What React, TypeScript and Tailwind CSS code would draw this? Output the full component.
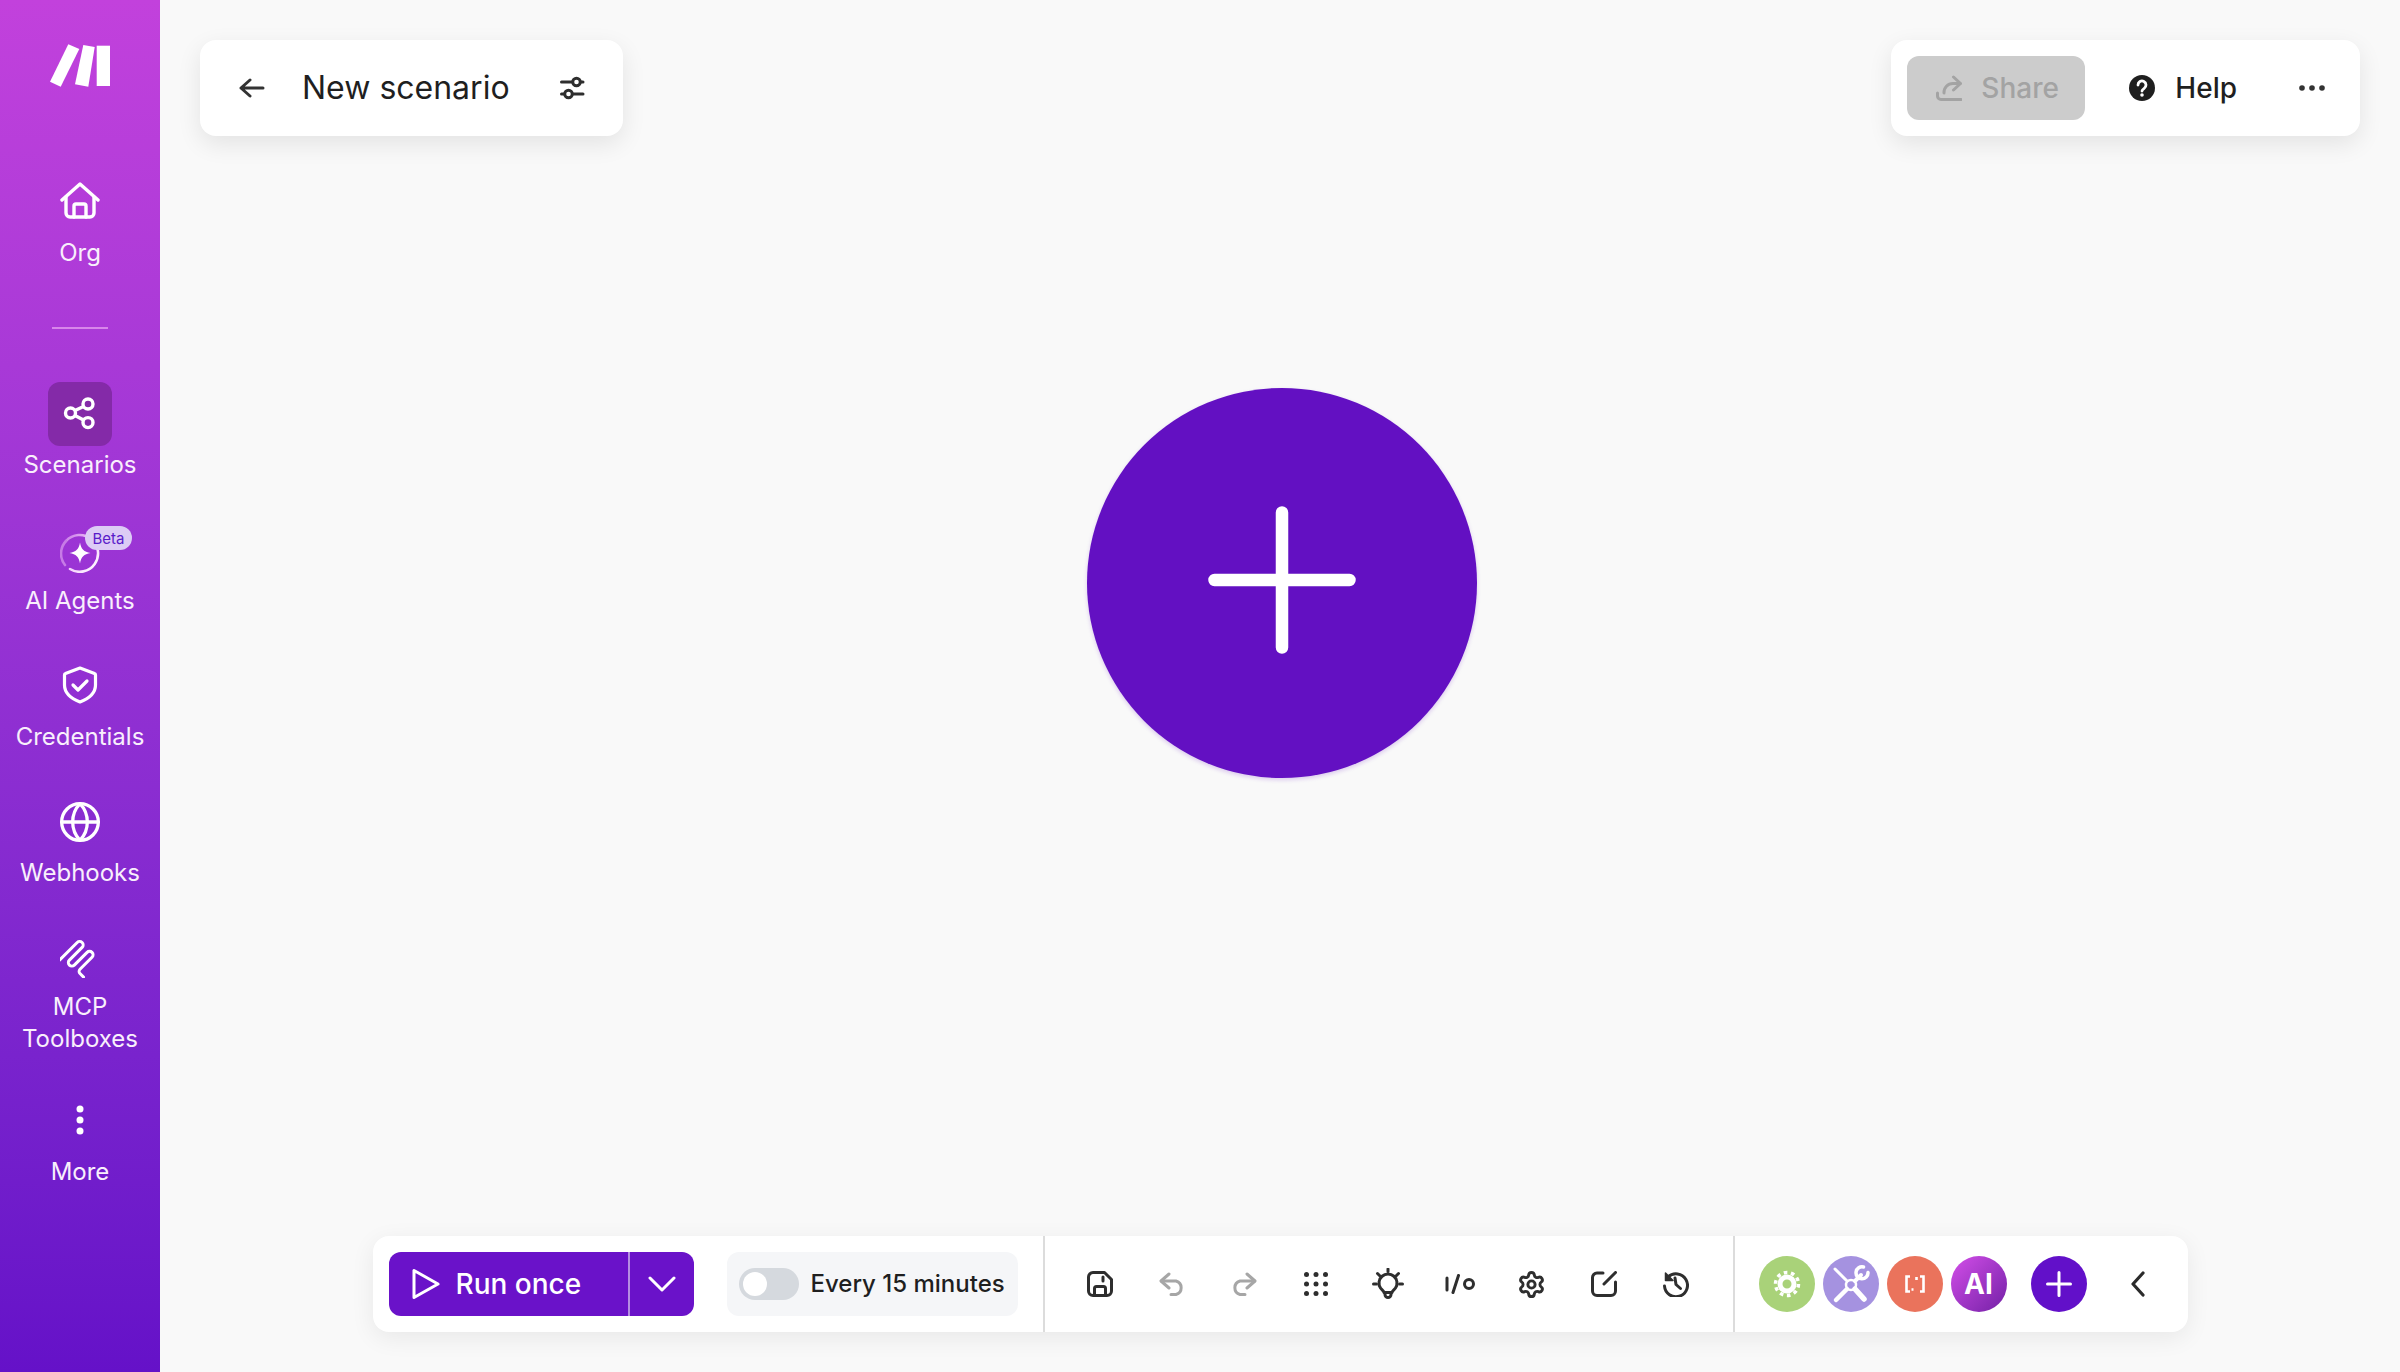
import type { ReactNode } from "react";
import { Globe, Settings } from "lucide-react";

function NavItem({
  icon,
  label,
  active,
  className = "",
}: {
  icon: ReactNode;
  label: ReactNode;
  active?: boolean;
  className?: string;
}) {
  return (
    <div className={`relative flex flex-col items-center w-full ${className}`}>
      <div
        className={`flex items-center justify-center w-16 h-16 rounded-xl ${
          active ? "bg-[#842aa8]" : ""
        }`}
      >
        {icon}
      </div>
      <div className="mt-[3px] text-[24px] leading-8 text-center text-[#f9effc]">
        {label}
      </div>
    </div>
  );
}

function Sidebar() {
  return (
    <aside className="flex flex-col items-center w-40 h-full shrink-0 pt-[44px] bg-linear-to-b from-[#c241dc] to-[#6511c8]">
      <svg viewBox="50 44 60 43" className="w-[60px] h-[43px]" fill="#fff">
        <path d="M68.3 44.3 79.3 49 60.7 86.7 50 81.7Z" />
        <path d="M83.3 45 94.7 47 88.3 86.7 75 84.3Z" />
        <path d="M96.7 45.7H110V86H96.7Z" />
      </svg>

      <NavItem
        className="mt-[83px]"
        label="Org"
        icon={
          <svg viewBox="0 0 40 37" className="w-10 h-[37px] -mt-[3px]" fill="none" stroke="#fff" strokeWidth="3.4" strokeLinecap="round" strokeLinejoin="round">
            <path d="M2 18 20 2l18 16" />
            <path d="M6 15v16a4 4 0 0 0 4 4h20a4 4 0 0 0 4-4V15" />
            <path d="M14 35V24a2 2 0 0 1 2-2h8a2 2 0 0 1 2 2v11" />
          </svg>
        }
      />

      <div className="mt-[58px] h-[2px] w-14 bg-[#d886ea]" />

      <NavItem
        className="mt-[53px]"
        active
        label="Scenarios"
        icon={
          <svg viewBox="0 0 34 34" className="w-[34px] h-[34px]" fill="none" stroke="#fff" strokeWidth="3.4">
            <circle cx="7.5" cy="16" r="5" />
            <circle cx="25" cy="7" r="5" />
            <circle cx="25" cy="25.6" r="5" />
            <path d="m12 13.5 8.5-4M12 18.5l8.5 4.6" />
          </svg>
        }
      />

      <NavItem
        className="mt-[37px]"
        label="AI Agents"
        icon={
          <svg viewBox="0 0 40 40" className="w-10 h-10 mt-[6px]" fill="none">
            <defs>
              <linearGradient id="agentArc" x1="1" y1="1" x2="0" y2="0">
                <stop offset="0" stopColor="#fff" />
                <stop offset="0.55" stopColor="#f3c8fb" />
                <stop offset="1" stopColor="#c77be6" />
              </linearGradient>
            </defs>
            <path d="M10 36A18.4 18.4 0 1 0 6 8" stroke="url(#agentArc)" strokeWidth="2.6" strokeLinecap="round" />
            <path d="M6 8A18.4 18.4 0 0 0 5 32" stroke="#c77be6" strokeWidth="2.6" strokeLinecap="round" />
            <path d="M20 9.5c1 6.5 4 9.5 10.5 10.5-6.5 1-9.5 4-10.5 10.5-1-6.5-4-9.5-10.5-10.5C16 19 19 16 20 9.5Z" fill="#fff" />
          </svg>
        }
      />

      <NavItem
        className="mt-[37px]"
        label="Credentials"
        icon={
          <svg viewBox="0 0 36 38" className="w-9 h-[38px] -mt-[2px]" fill="none" stroke="#fff" strokeWidth="3.2" strokeLinecap="round" strokeLinejoin="round">
            <path d="M18 2 32.5 7.5a1.5 1.5 0 0 1 1 1.4V19c0 8-6.5 13.5-15.5 17C9 32.5 2.5 27 2.5 19V8.9a1.5 1.5 0 0 1 1-1.4Z" />
            <path d="m11 19 5 5 9-9" />
          </svg>
        }
      />

      <NavItem
        className="mt-[37px]"
        label="Webhooks"
        icon={<Globe className="size-[44px] text-white -mt-[1px]" strokeWidth={1.8} />}
      />

      <NavItem
        className="mt-[37px]"
        label={
          <div className="-mt-[2px]">
            MCP
            <br />
            Toolboxes
          </div>
        }
        icon={
          <svg viewBox="0 0 40 40" className="w-10 h-10" fill="none" stroke="#fff" strokeWidth="3" strokeLinecap="round" strokeLinejoin="round">
            <path
              transform="rotate(-45 20 20)"
              d="M4 7h25a3.5 3.5 0 0 1 0 7H11a3.5 3.5 0 0 0 0 7h18a3.5 3.5 0 0 1 0 7H12a3 3 0 0 0-3 3v5"
            />
          </svg>
        }
      />

      <NavItem
        className="-mt-[2px] pt-[36px]"
        label="More"
        icon={
          <svg viewBox="0 0 8 30" className="w-2 h-[30px] -mt-[2px]" fill="#fff">
            <circle cx="4" cy="4" r="3.5" />
            <circle cx="4" cy="15" r="3.5" />
            <circle cx="4" cy="26" r="3.5" />
          </svg>
        }
      />
    </aside>
  );
}

function TopBar() {
  return (
    <div className="flex items-start justify-between">
      <div className="flex items-center h-24 pl-[39px] pr-[38px] rounded-2xl bg-white shadow-[0_8px_24px_rgba(0,0,0,0.09)]">
        <svg viewBox="0 0 26 20" className="w-[26px] h-5" fill="none" stroke="#333" strokeWidth="3" strokeLinecap="round" strokeLinejoin="round">
          <path d="M11 2 2 10l9 8M2 10h22" />
        </svg>
        <span className="ml-[37px] text-[32px] leading-10 text-[#1f1f1f]">New scenario</span>
        <svg viewBox="0 0 25 24" className="ml-[50px] w-[25px] h-6" fill="#fff" stroke="#2e2e2e" strokeWidth="3" strokeLinecap="round">
          <path d="M1.5 6H23M1.5 18H23" />
          <circle cx="16.5" cy="6" r="3.8" />
          <circle cx="8.5" cy="18" r="3.8" />
        </svg>
      </div>

      <div className="flex items-center h-24 pl-4 pr-[35px] rounded-2xl bg-white shadow-[0_8px_24px_rgba(0,0,0,0.09)]">
        <div className="flex items-center w-[178px] h-16 pl-[29px] rounded-xl bg-[#cccccc] text-[#a3a3a3]">
          <svg viewBox="0 0 26 26" className="w-[26px] h-[26px]" fill="none" stroke="#a3a3a3" strokeWidth="3" strokeLinecap="round" strokeLinejoin="round">
            <path d="M1.5 18v3A3.5 3.5 0 0 0 5 24.5h20" />
            <path d="M8 18a9 9 0 0 1 9-9.5h7" />
            <path d="m17.5 2 7 6.5-7 6.5" />
          </svg>
          <span className="ml-[19px] text-[28px] leading-9 font-medium">Share</span>
        </div>
        <svg viewBox="0 0 26 26" className="ml-[44px] w-[26px] h-[26px]" fill="none">
          <circle cx="13" cy="13" r="13" fill="#1f1f1f" />
          <path d="M9 10a4 4 0 1 1 6.2 3.3c-1.5 1-2.2 1.6-2.2 2.7" stroke="#fff" strokeWidth="2.8" strokeLinecap="round" />
          <circle cx="13" cy="20" r="1.8" fill="#fff" />
        </svg>
        <span className="ml-5 text-[28px] leading-9 font-medium text-[#1f1f1f]">Help</span>
        <svg viewBox="0 0 26 6" className="ml-[62px] w-[26px] h-1.5" fill="#333">
          <circle cx="3" cy="3" r="2.8" />
          <circle cx="13" cy="3" r="2.8" />
          <circle cx="23" cy="3" r="2.8" />
        </svg>
      </div>
    </div>
  );
}

function ToolIcon({ children }: { children: ReactNode }) {
  return <div className="flex items-center justify-center w-[72px] h-10">{children}</div>;
}

function ToolIcons() {
  const stroke = {
    fill: "none",
    stroke: "#2e2e2e",
    strokeWidth: 3,
    strokeLinecap: "round" as const,
    strokeLinejoin: "round" as const,
  };
  return (
    <div className="flex items-center pl-[19px] pr-[21px] h-full">
      <ToolIcon>
        <svg viewBox="0 0 26 26" className="w-[26px] h-[26px]" {...stroke}>
          <path d="M6 1.5h11.5l7 7V20a4.5 4.5 0 0 1-4.5 4.5H6A4.5 4.5 0 0 1 1.5 20V6A4.5 4.5 0 0 1 6 1.5Z" />
          <path d="M16 6v4M7.5 24v-6.5a2 2 0 0 1 2-2h7a2 2 0 0 1 2 2V24" />
        </svg>
      </ToolIcon>
      <ToolIcon>
        <svg viewBox="0 0 26 24" className="w-[26px] h-6" {...stroke} stroke="#a6a6a6">
          <path d="M10 2 2 9l8 7" />
          <path d="M2.5 9H17a7 7 0 0 1 0 13.5h-5" />
        </svg>
      </ToolIcon>
      <ToolIcon>
        <svg viewBox="0 0 26 24" className="w-[26px] h-6" {...stroke} stroke="#a6a6a6">
          <path d="m16 2 8 7-8 7" />
          <path d="M23.5 9H9a7 7 0 0 0 0 13.5h5" />
        </svg>
      </ToolIcon>
      <ToolIcon>
        <svg viewBox="0 0 24 24" className="w-6 h-6" fill="#2e2e2e">
          {[2.5, 12, 21.5].map((y) =>
            [2.5, 12, 21.5].map((x) => <circle key={`${x}-${y}`} cx={x} cy={y} r="2.5" />)
          )}
        </svg>
      </ToolIcon>
      <ToolIcon>
        <svg viewBox="0 0 32 32" className="w-8 h-8" {...stroke}>
          <path d="M12 24.5c-.3-2-2.5-3-3.5-4.5a9 9 0 1 1 15 0c-1 1.5-3.2 2.5-3.5 4.5Z" />
          <path d="M13 25v1.5a3 3 0 0 0 6 0V25M16 1v2.5M1.5 16h3M27.5 16h3M5.5 5.5l2 2M26.5 5.5l-2 2" />
        </svg>
      </ToolIcon>
      <ToolIcon>
        <svg viewBox="0 0 30 20" className="w-[30px] h-5" {...stroke}>
          <path d="M2 4v12M13.5 1.5 8 18.5" />
          <circle cx="24" cy="10" r="4.5" />
        </svg>
      </ToolIcon>
      <ToolIcon>
        <Settings className="size-[29px] text-[#2e2e2e]" strokeWidth={2.4} />
      </ToolIcon>
      <ToolIcon>
        <svg viewBox="0 0 26 26" className="w-[26px] h-[26px]" {...stroke}>
          <path d="M12 2H6a4.5 4.5 0 0 0-4.5 4.5V20A4.5 4.5 0 0 0 6 24.5h14a4.5 4.5 0 0 0 4.5-4.5v-9" />
          <path d="M13 13 24.5 1.5" />
        </svg>
      </ToolIcon>
      <ToolIcon>
        <svg viewBox="0 0 26 26" className="w-[26px] h-[26px]" {...stroke}>
          <path d="M5 6A11.5 11.5 0 1 1 1.5 15" />
          <path d="M2.5 2v7.5H10Z" fill="#2e2e2e" strokeWidth={1.5} />
          <path d="m12 7 1 6.5 4.5 4" />
        </svg>
      </ToolIcon>
    </div>
  );
}

function ModuleBadges() {
  return (
    <div className="flex items-center h-full pl-6 pr-[43px]">
      <div className="flex items-center gap-2">
        <div className="flex items-center justify-center w-14 h-14 rounded-full bg-[#a9d279]">
          <svg viewBox="0 0 28 28" className="w-7 h-7" fill="none">
            <circle cx="14" cy="14" r="11.5" stroke="#fff" strokeWidth="3.5" strokeDasharray="3.6 3.63" />
            <circle cx="14" cy="14" r="7" stroke="#fff" strokeWidth="5" />
          </svg>
        </div>
        <div className="flex items-center justify-center w-14 h-14 rounded-full bg-[#a592e0]">
          <svg viewBox="0 0 40 40" className="w-10 h-10" fill="none" stroke="#fff" strokeLinecap="round">
            <circle cx="20" cy="21" r="5" strokeWidth="2.5" />
            <path d="M4 5l12 12" strokeWidth="3" />
            <path d="M5 36 16 25" strokeWidth="4.5" />
            <path d="M24 25l9 10" strokeWidth="5.5" />
            <path d="M24 17l6-6" strokeWidth="4" />
            <path d="M37 8.5A6 6 0 1 1 32.5 3" strokeWidth="3.5" />
          </svg>
        </div>
        <div className="flex items-center justify-center w-14 h-14 rounded-full bg-[#ea735c]">
          <svg viewBox="0 0 20 18" className="w-5 h-[18px]" fill="none" stroke="#fff" strokeWidth="2.6">
            <path d="M5 1.5H1.5v15H5M15 1.5h3.5v15H15" />
            <path d="M6.500 14.500h2M11.500 2v3" />
          </svg>
        </div>
        <div className="flex items-center justify-center w-14 h-14 rounded-full bg-linear-to-br from-[#d44ee9] to-[#741fa6] text-[28px] leading-none font-bold text-white">
          AI
        </div>
      </div>
      <div className="ml-6 flex items-center justify-center w-14 h-14 rounded-full bg-[#6210c9]">
        <svg viewBox="0 0 26 26" className="w-[26px] h-[26px]" stroke="#fff" strokeWidth="3" strokeLinecap="round">
          <path d="M13 1.5v23M1.5 13h23" />
        </svg>
      </div>
      <svg viewBox="0 0 14 26" className="ml-[44px] w-[14px] h-[26px]" fill="none" stroke="#2b2b2b" strokeWidth="3.2" strokeLinecap="round" strokeLinejoin="round">
        <path d="M12 2 2 13l10 11" />
      </svg>
    </div>
  );
}

function Toolbar() {
  return (
    <div className="mt-auto self-center flex items-center h-24 rounded-2xl bg-white shadow-[0_6px_24px_rgba(0,0,0,0.07)]">
      <div className="flex items-center pl-4 pr-[25px]">
        <div className="flex items-stretch w-[305px] h-16 rounded-xl bg-[#6a12c9] text-white">
          <div className="flex items-center flex-1 pl-[23px]">
            <svg viewBox="0 0 28 32" className="w-7 h-8" fill="none" stroke="#fff" strokeWidth="3" strokeLinejoin="round">
              <path d="M2 2.5v27L26 16Z" />
            </svg>
            <span className="ml-[16px] text-[28px] leading-9 font-medium">Run once</span>
          </div>
          <div className="w-[2px] bg-[#b58de2]" />
          <div className="flex items-center justify-center w-[64px]">
            <svg viewBox="0 0 28 16" className="w-7 h-4" fill="none" stroke="#fff" strokeWidth="3" strokeLinecap="round" strokeLinejoin="round">
              <path d="m2 2 12 12L26 2" />
            </svg>
          </div>
        </div>
        <div className="ml-[33px] flex items-center w-[291px] h-16 pl-3 rounded-xl bg-[#f5f6f8]">
          <div className="flex items-center w-[60px] h-8 pl-1 rounded-full bg-[#d5d9de]">
            <div className="w-6 h-6 rounded-full bg-white" />
          </div>
          <span className="ml-3 text-[24px] leading-8 font-medium whitespace-nowrap text-[#1f1f1f]">
            Every 15 minutes
          </span>
        </div>
      </div>
      <div className="w-[2px] h-full bg-[#dcdcdc]" />
      <ToolIcons />
      <div className="w-[2px] h-full bg-[#dcdcdc]" />
      <ModuleBadges />
    </div>
  );
}

export default function App() {
  return (
    <div className="flex w-full h-screen overflow-hidden bg-[#f9f9f9] font-['Inter',sans-serif]">
      <Sidebar />
      <main className="flex flex-col flex-1 min-w-0 h-full p-10">
        <TopBar />
        <div className="self-center ml-[4px] mt-[252px] flex items-center justify-center w-[390px] h-[390px] rounded-full bg-[#6310c2] shadow-[0_2px_4px_rgba(98,16,193,0.2)]">
          <svg viewBox="0 0 148 148" className="w-[148px] h-[148px] -mt-[6px]" stroke="#fff" strokeWidth="12.5" strokeLinecap="round">
            <path d="M74 6.5v135M6.5 74h135" />
          </svg>
        </div>
        <Toolbar />
      </main>
      {/* Beta tag sits on top of the AI Agents icon */}
      <div className="absolute left-[85px] top-[526px] flex items-center justify-center w-[47px] h-6 rounded-full bg-[#dccbf5] text-[15px] leading-none text-[#5a1bc9]">
        Beta
      </div>
    </div>
  );
}
